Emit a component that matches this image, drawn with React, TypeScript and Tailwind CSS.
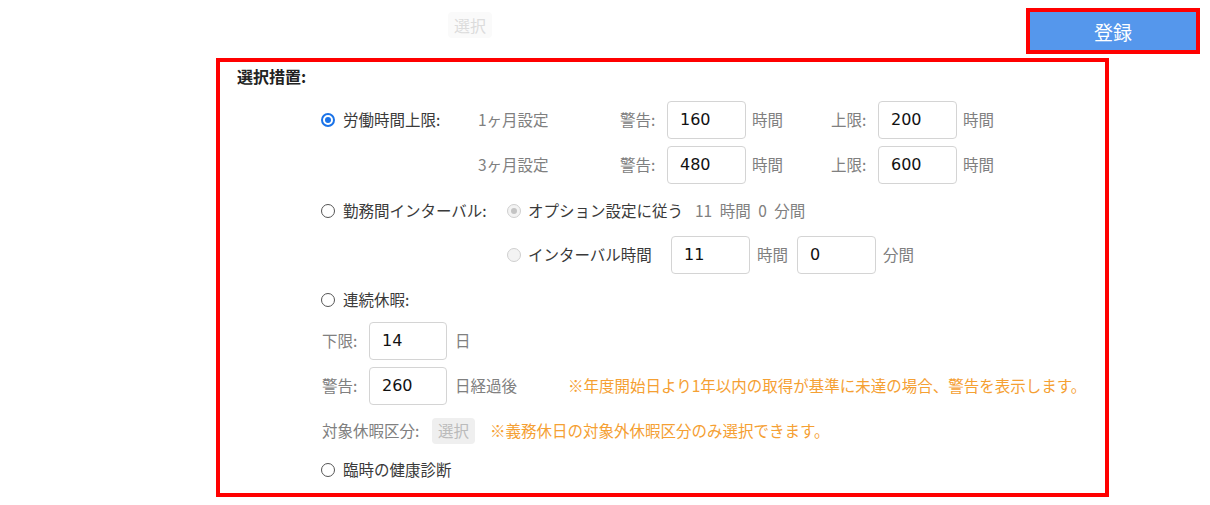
import React from "react";

const jp = "font-['Noto_Sans_CJK_JP',sans-serif]";

function Radio({ checked, disabled }: { checked?: boolean; disabled?: boolean }) {
  if (disabled) {
    return (
      <span className="flex h-[14px] w-[14px] shrink-0 items-center justify-center rounded-full border border-[#cfcfcf] bg-[#f3f3f3]">
        {checked && <span className="h-[6px] w-[6px] rounded-full bg-[#c4c4c4]" />}
      </span>
    );
  }
  if (checked) {
    return (
      <span className="flex h-[14px] w-[14px] shrink-0 items-center justify-center rounded-full border-2 border-[#1a73e8] bg-white">
        <span className="h-[6px] w-[6px] rounded-full bg-[#1a73e8]" />
      </span>
    );
  }
  return <span className="h-[14px] w-[14px] shrink-0 rounded-full border border-[#555] bg-white" />;
}

function NumBox({ value, w = "w-[79px]" }: { value: string; w?: string }) {
  return (
    <div
      className={`flex h-[38px] ${w} shrink-0 items-center rounded-[4px] border border-[#d4d4d4] bg-white pl-[12px] font-['DejaVu_Sans',sans-serif] text-[16px] text-[#111]`}
    >
      {value}
    </div>
  );
}

export default function App() {
  return (
    <div className={`h-[505px] w-[1210px] bg-white ${jp} text-[15.5px] leading-none`}>
      {/* top bar */}
      <div className="flex h-[58px] items-start">
        <button className="ml-[448px] mt-[12px] flex h-[26px] w-[44px] items-center justify-center rounded-[4px] bg-[#fafafa] text-[16px] text-[#dcdcdc]">
          選択
        </button>
        <div className="ml-auto mr-[10px] mt-[8px] border-4 border-[#ff0000]">
          <button className="flex h-[38px] w-[166px] items-center justify-center bg-[#5597ec] text-[19px] text-white">
            登録
          </button>
        </div>
      </div>

      {/* main box */}
      <div className="ml-[216px] h-[439px] w-[893px] border-4 border-[#ff0000]">
        <div className="flex h-[28px] items-center pl-[17px] text-[16px] font-bold text-[#222]">選択措置:</div>

        <div className="mt-[11px] flex flex-col pl-[101px] text-[#808080]">
          {/* 労働時間上限 1ヶ月 */}
          <div className="flex h-[38px] items-center">
            <div className="flex w-[157px] items-center">
              <Radio checked />
              <span className="ml-[8px] text-[#3a3a3a]">労働時間上限:</span>
            </div>
            <span className="w-[142px]">1ヶ月設定</span>
            <span className="w-[47px]">警告:</span>
            <NumBox value="160" />
            <span className="w-[85px] pl-[6px]">時間</span>
            <span className="w-[47px]">上限:</span>
            <NumBox value="200" />
            <span className="pl-[6px]">時間</span>
          </div>

          {/* 3ヶ月 */}
          <div className="mt-[7px] flex h-[38px] items-center">
            <div className="w-[157px]" />
            <span className="w-[142px]">3ヶ月設定</span>
            <span className="w-[47px]">警告:</span>
            <NumBox value="480" />
            <span className="w-[85px] pl-[6px]">時間</span>
            <span className="w-[47px]">上限:</span>
            <NumBox value="600" />
            <span className="pl-[6px]">時間</span>
          </div>

          {/* 勤務間インターバル */}
          <div className="mt-[8px] flex h-[38px] items-center">
            <div className="flex w-[186px] items-center">
              <Radio />
              <span className="ml-[8px] text-[#3a3a3a]">勤務間インターバル:</span>
            </div>
            <Radio disabled checked />
            <span className="ml-[7px] w-[167px] text-[#3a3a3a]">オプション設定に従う</span>
            <span className="whitespace-pre [word-spacing:4px]">11 時間 0 分間</span>
          </div>

          <div className="mt-[6px] flex h-[38px] items-center">
            <div className="w-[186px]" />
            <Radio disabled />
            <span className="ml-[7px] w-[143px] text-[#3a3a3a]">インターバル時間</span>
            <NumBox value="11" />
            <span className="w-[47px] pl-[7px]">時間</span>
            <NumBox value="0" />
            <span className="pl-[7px]">分間</span>
          </div>

          {/* 連続休暇 */}
          <div className="mt-[7px] flex h-[38px] items-center">
            <Radio />
            <span className="ml-[8px] text-[#3a3a3a]">連続休暇:</span>
          </div>

          <div className="mt-[3px] flex h-[38px] items-center pl-[1px]">
            <span className="w-[47px]">下限:</span>
            <NumBox value="14" w="w-[78px]" />
            <span className="pl-[8px]">日</span>
          </div>

          <div className="mt-[7px] flex h-[38px] items-center pl-[1px]">
            <span className="w-[47px]">警告:</span>
            <NumBox value="260" w="w-[78px]" />
            <span className="w-[121px] pl-[8px]">日経過後</span>
            <span className="text-[#f5a033]">※年度開始日より1年以内の取得が基準に未達の場合、警告を表示します。</span>
          </div>

          <div className="mt-[7px] flex h-[38px] items-center pl-[1px]">
            <span className="w-[110px]">対象休暇区分:</span>
            <button className="flex h-[26px] w-[43px] items-center justify-center rounded-[4px] bg-[#efefef] text-[15.5px] text-[#bbb]">
              選択
            </button>
            <span className="ml-[15px] text-[#f5a033]">※義務休日の対象外休暇区分のみ選択できます。</span>
          </div>

          <div className="mt-[1px] flex h-[38px] items-center">
            <Radio />
            <span className="ml-[8px] text-[#3a3a3a]">臨時の健康診断</span>
          </div>
        </div>
      </div>
    </div>
  );
}
